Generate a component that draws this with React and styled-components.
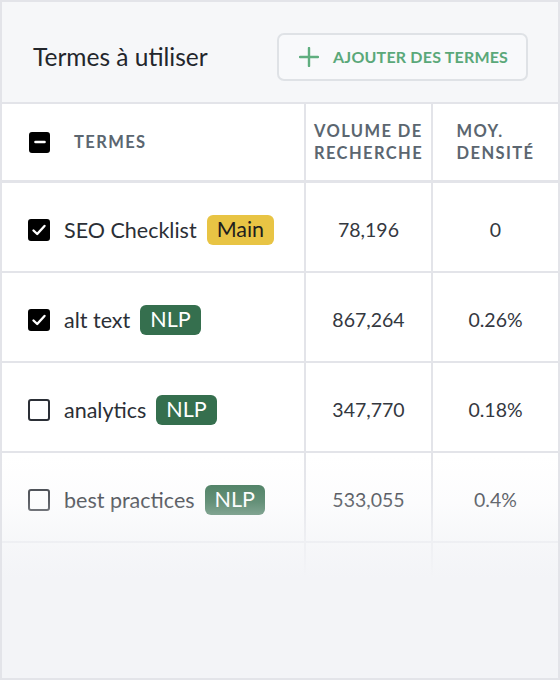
import React from "react";
import styled, { createGlobalStyle } from "styled-components";

const GlobalStyle = createGlobalStyle`
  html, body {
    margin: 0;
    padding: 0;
    background: #ffffff;
  }
  * {
    box-sizing: border-box;
  }
`;

const Card = styled.div`
  position: relative;
  width: 560px;
  height: 680px;
  border: 2px solid #e3e4e9;
  background: #f3f4f7;
  overflow: hidden;
  font-family: Lato, "Noto Sans", sans-serif;
`;

const Header = styled.div`
  display: flex;
  align-items: center;
  justify-content: space-between;
  height: 102px;
  padding: 9px 30px 0 31px;
  background: #f6f7f9;
  border-bottom: 2px solid #e3e4e9;
`;

const Title = styled.h2`
  margin: 0;
  font-size: 24.5px;
  font-weight: 400;
  color: #23262c;
`;

const AddButton = styled.button`
  display: flex;
  align-items: center;
  gap: 14px;
  height: 48px;
  width: 251px;
  padding: 0 0 0 20px;
  border: 2px solid #dfe2e6;
  border-radius: 7px;
  background: #f8f9fb;
  color: #5aa879;
  font-family: inherit;
  font-size: 16px;
  font-weight: 700;
  letter-spacing: 0.2px;
  cursor: pointer;
`;

const Table = styled.div`
  background: #ffffff;
`;

const Row = styled.div`
  display: grid;
  grid-template-columns: 304px 127px 1fr;
  height: ${(p) => (p.$head ? "79px" : "90px")};
  border-bottom: ${(p) => (p.$head ? "3px" : "2px")} solid #e3e4e9;
`;

const Cell = styled.div`
  display: flex;
  align-items: center;
  justify-content: ${(p) => (p.$left ? "flex-start" : "center")};
  padding-left: ${(p) => (p.$left ? "26px" : "0")};
  padding-top: ${(p) => (p.$head ? "0" : "5px")};
  border-right: ${(p) => (p.$last ? "none" : "2px solid #e3e4e9")};
  font-size: 19.5px;
  color: #34383f;
`;

const HeadLabel = styled.div`
  font-size: 16.5px;
  font-weight: 700;
  line-height: 22px;
  letter-spacing: 1.4px;
  color: #5b6670;
  text-align: left;
  margin-left: ${(p) => p.$indent || "0"};
`;

const Box = styled.span`
  flex: none;
  display: inline-flex;
  align-items: center;
  justify-content: center;
  width: ${(p) => (p.$small ? "21px" : "22px")};
  height: ${(p) => (p.$small ? "21px" : "22px")};
  margin-left: ${(p) => (p.$small ? "1px" : "0")};
  border-radius: 3px;
  background: ${(p) => (p.$on ? "#000000" : "#ffffff")};
  border: 2px solid ${(p) => (p.$on ? "#000000" : "#2b2f36")};
`;

const Term = styled.span`
  margin-left: 14px;
  font-size: 21.5px;
  color: #2b2f36;
`;

const Badge = styled.span`
  margin-left: 10px;
  padding: 2px 10px 3px;
  border-radius: 6px;
  font-size: 21.5px;
  line-height: 25px;
  background: ${(p) => (p.$kind === "main" ? "#e8c444" : "#356f4e")};
  color: ${(p) => (p.$kind === "main" ? "#1e1e1e" : "#ffffff")};
`;

const Fade = styled.div`
  position: absolute;
  left: 0;
  right: 0;
  top: 455px;
  bottom: 0;
  pointer-events: none;
  background: linear-gradient(
    to bottom,
    rgba(243, 244, 247, 0) 0px,
    rgba(243, 244, 247, 0.25) 45px,
    rgba(243, 244, 247, 0.75) 88px,
    #f3f4f7 120px
  );
`;

const Check = () => (
  <svg width="16" height="16" viewBox="0 0 16 16">
    <path d="M2.5 8.5 L6.2 12 L13.5 4" fill="none" stroke="#fff" strokeWidth="2.4" strokeLinecap="round" strokeLinejoin="round" />
  </svg>
);

const Dash = () => (
  <svg width="14" height="14" viewBox="0 0 14 14">
    <path d="M2.5 7 H11.5" stroke="#fff" strokeWidth="2.6" strokeLinecap="round" />
  </svg>
);

const Plus = () => (
  <svg width="20" height="20" viewBox="0 0 20 20">
    <path d="M10 1 V19 M1 10 H19" stroke="#5fae7f" strokeWidth="2.4" strokeLinecap="round" />
  </svg>
);

const terms = [
  { name: "SEO Checklist", tag: "Main", kind: "main", on: true, volume: "78,196", density: "0" },
  { name: "alt text", tag: "NLP", kind: "nlp", on: true, volume: "867,264", density: "0.26%" },
  { name: "analytics", tag: "NLP", kind: "nlp", on: false, volume: "347,770", density: "0.18%" },
  { name: "best practices", tag: "NLP", kind: "nlp", on: false, volume: "533,055", density: "0.4%" },
];

export default function App() {
  return (
    <>
      <GlobalStyle />
      <Card>
        <Header>
          <Title>Termes à utiliser</Title>
          <AddButton>
            <Plus />
            AJOUTER DES TERMES
          </AddButton>
        </Header>
        <Table>
          <Row $head>
            <Cell $left $head>
              <Box $on $small>
                <Dash />
              </Box>
              <HeadLabel $indent="24px">TERMES</HeadLabel>
            </Cell>
            <Cell $head>
              <HeadLabel>
                VOLUME DE
                <br />
                RECHERCHE
              </HeadLabel>
            </Cell>
            <Cell $last $head>
              <HeadLabel>
                MOY.
                <br />
                DENSITÉ
              </HeadLabel>
            </Cell>
          </Row>
          {terms.map((t) => (
            <Row key={t.name}>
              <Cell $left>
                <Box $on={t.on}>{t.on && <Check />}</Box>
                <Term>{t.name}</Term>
                <Badge $kind={t.kind}>{t.tag}</Badge>
              </Cell>
              <Cell>{t.volume}</Cell>
              <Cell $last>{t.density}</Cell>
            </Row>
          ))}
          <Row>
            <Cell $left />
            <Cell />
            <Cell $last />
          </Row>
        </Table>
        <Fade />
      </Card>
    </>
  );
}
